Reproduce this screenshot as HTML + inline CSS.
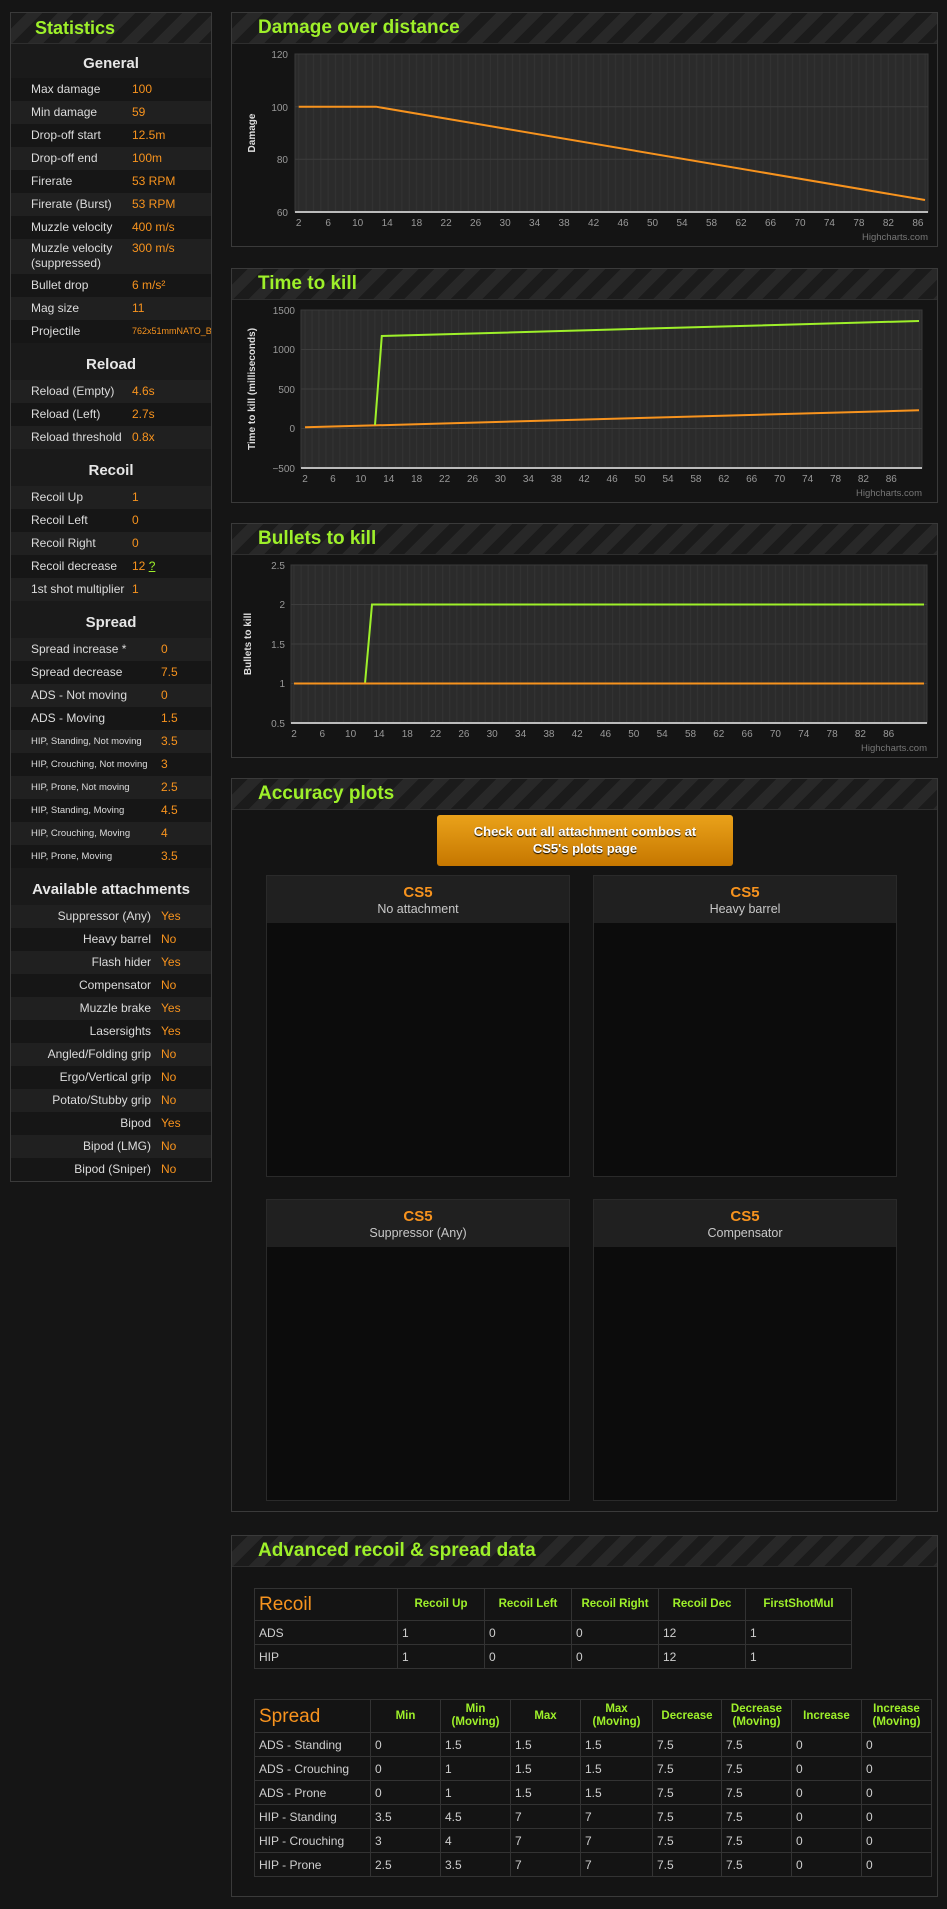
<!DOCTYPE html>
<html><head><meta charset="utf-8">
<style>
*{box-sizing:border-box;margin:0;padding:0}
body{width:947px;height:1909px;background:#151515;font-family:"Liberation Sans",Arial,sans-serif;position:relative;overflow:hidden;color:#d8d8d8}
.abs{position:absolute}
.hdr{background:repeating-linear-gradient(135deg,#1b1b1b 0 11px,#282828 11px 22px);border-bottom:1px solid #2e2e2e;height:31px;position:relative}
.hdr span{position:absolute;top:4px;font-weight:bold;font-size:19px;color:#9ef02a}
.panel{position:absolute;left:231px;width:707px;border:1px solid #3a3a3a;background:#141414}
#side{position:absolute;left:10px;top:12px;width:202px;height:1170px;border:1px solid #3a3a3a;background:#191919}
.sh{height:37px;text-align:center;font-weight:bold;font-size:15px;color:#e6e6e6;padding-top:13px;background:#1a1a1a}
.r{height:23px;font-size:12px;line-height:23px;position:relative;background:#161616}
.r.l{background:#202020}
.r b{font-weight:normal;position:absolute;left:20px;color:#dcdcdc;white-space:nowrap}
.r i{font-style:normal;position:absolute;left:121px;color:#f7931e;white-space:nowrap}
.sp i{left:150px}
.sm b{font-size:9.5px}
.at b{left:auto;right:60px}
.at i{left:150px}
.box{position:absolute;width:304px;border:1px solid #2a2a2a;background:#0c0c0c}
.box .bh{height:47px;background:#202020;text-align:center;padding-top:8px}
.bh .c{color:#f7931e;font-weight:bold;font-size:15px}
.bh .s{color:#c8c8c8;font-size:12.5px;margin-top:1px}
table{border-collapse:collapse;position:absolute;font-size:12px;color:#cfcfcf}
td,th{border:1px solid #333;padding:0 4px;height:24px;text-align:left;font-weight:normal}
th{color:#9ef02a;font-weight:bold;text-align:center;font-size:11.5px;line-height:13px}
th.t{color:#f7931e;font-size:19px;text-align:left;font-weight:normal}
</style></head><body>

<div id="side">
<div class="hdr"><span style="left:24px;font-size:18px;top:5px">Statistics</span></div>
<div class="sh" style="height:34px;padding-top:11px">General</div>
<div class="r"><b>Max damage</b><i>100</i></div>
<div class="r l"><b>Min damage</b><i>59</i></div>
<div class="r"><b>Drop-off start</b><i>12.5m</i></div>
<div class="r l"><b>Drop-off end</b><i>100m</i></div>
<div class="r"><b>Firerate</b><i>53 RPM</i></div>
<div class="r l"><b>Firerate (Burst)</b><i>53 RPM</i></div>
<div class="r"><b>Muzzle velocity</b><i>400 m/s</i></div>
<div class="r l" style="height:35px;line-height:15px"><b style="top:2px">Muzzle velocity<br>(suppressed)</b><i style="top:2px">300 m/s</i></div>
<div class="r"><b>Bullet drop</b><i>6 m/s²</i></div>
<div class="r l"><b>Mag size</b><i>11</i></div>
<div class="r" style="overflow:hidden"><b>Projectile</b><i style="font-size:9px">762x51mmNATO_Bolt_c</i></div>
<div class="sh">Reload</div>
<div class="r l"><b>Reload (Empty)</b><i>4.6s</i></div>
<div class="r"><b>Reload (Left)</b><i>2.7s</i></div>
<div class="r l"><b>Reload threshold</b><i>0.8x</i></div>
<div class="sh">Recoil</div>
<div class="r l"><b>Recoil Up</b><i>1</i></div>
<div class="r"><b>Recoil Left</b><i>0</i></div>
<div class="r l"><b>Recoil Right</b><i>0</i></div>
<div class="r"><b>Recoil decrease</b><i>12 <u style="color:#9ef02a">?</u></i></div>
<div class="r l"><b>1st shot multiplier</b><i>1</i></div>
<div class="sh">Spread</div>
<div class="r l sp"><b>Spread increase *</b><i>0</i></div>
<div class="r sp"><b>Spread decrease</b><i>7.5</i></div>
<div class="r l sp"><b>ADS - Not moving</b><i>0</i></div>
<div class="r sp"><b>ADS - Moving</b><i>1.5</i></div>
<div class="r l sp sm"><b>HIP, Standing, Not moving</b><i>3.5</i></div>
<div class="r sp sm"><b>HIP, Crouching, Not moving</b><i>3</i></div>
<div class="r l sp sm"><b>HIP, Prone, Not moving</b><i>2.5</i></div>
<div class="r sp sm"><b>HIP, Standing, Moving</b><i>4.5</i></div>
<div class="r l sp sm"><b>HIP, Crouching, Moving</b><i>4</i></div>
<div class="r sp sm"><b>HIP, Prone, Moving</b><i>3.5</i></div>
<div class="sh">Available attachments</div>
<div class="r l at"><b>Suppressor (Any)</b><i>Yes</i></div>
<div class="r at"><b>Heavy barrel</b><i>No</i></div>
<div class="r l at"><b>Flash hider</b><i>Yes</i></div>
<div class="r at"><b>Compensator</b><i>No</i></div>
<div class="r l at"><b>Muzzle brake</b><i>Yes</i></div>
<div class="r at"><b>Lasersights</b><i>Yes</i></div>
<div class="r l at"><b>Angled/Folding grip</b><i>No</i></div>
<div class="r at"><b>Ergo/Vertical grip</b><i>No</i></div>
<div class="r l at"><b>Potato/Stubby grip</b><i>No</i></div>
<div class="r at"><b>Bipod</b><i>Yes</i></div>
<div class="r l at"><b>Bipod (LMG)</b><i>No</i></div>
<div class="r at"><b>Bipod (Sniper)</b><i>No</i></div>
</div>

<div class="panel" style="top:12px;height:235px"><div class="hdr"><span style="left:26px">Damage over distance</span></div></div>
<div class="panel" style="top:268px;height:235px"><div class="hdr"><span style="left:26px">Time to kill</span></div></div>
<div class="panel" style="top:523px;height:235px"><div class="hdr"><span style="left:26px">Bullets to kill</span></div></div>
<div class="panel" style="top:778px;height:734px"><div class="hdr"><span style="left:26px">Accuracy plots</span></div>
<div class="abs" style="left:205px;top:36px;width:296px;height:51px;border-radius:3px;background:linear-gradient(#eaa21a,#c67700);color:#fff;font-weight:bold;font-size:13px;text-align:center;line-height:17px;padding-top:8px;text-shadow:0 1px 1px #000">Check out all attachment combos at<br>CS5's plots page</div>
</div>
<div class="box" style="left:266px;top:875px;height:302px"><div class="bh"><div class="c">CS5</div><div class="s">No attachment</div></div></div>
<div class="box" style="left:593px;top:875px;height:302px"><div class="bh"><div class="c">CS5</div><div class="s">Heavy barrel</div></div></div>
<div class="box" style="left:266px;top:1199px;height:302px"><div class="bh"><div class="c">CS5</div><div class="s">Suppressor (Any)</div></div></div>
<div class="box" style="left:593px;top:1199px;height:302px"><div class="bh"><div class="c">CS5</div><div class="s">Compensator</div></div></div>

<div class="panel" style="top:1535px;height:362px"><div class="hdr"><span style="left:26px">Advanced recoil &amp; spread data</span></div></div>

<table style="left:254px;top:1588px;width:598px">
<tr style="height:32px"><th class="t" style="width:143px">Recoil</th><th style="width:87px">Recoil Up</th><th style="width:87px">Recoil Left</th><th style="width:87px">Recoil Right</th><th style="width:87px">Recoil Dec</th><th>FirstShotMul</th></tr>
<tr><td>ADS</td><td>1</td><td>0</td><td>0</td><td>12</td><td>1</td></tr>
<tr><td>HIP</td><td>1</td><td>0</td><td>0</td><td>12</td><td>1</td></tr>
</table>

<table style="left:254px;top:1699px;width:678px">
<tr style="height:33px"><th class="t" style="width:116px">Spread</th><th style="width:70px">Min</th><th style="width:70px">Min<br>(Moving)</th><th style="width:70px">Max</th><th style="width:72px">Max<br>(Moving)</th><th style="width:69px">Decrease</th><th style="width:70px">Decrease<br>(Moving)</th><th style="width:70px">Increase</th><th>Increase<br>(Moving)</th></tr>
<tr><td>ADS - Standing</td><td>0</td><td>1.5</td><td>1.5</td><td>1.5</td><td>7.5</td><td>7.5</td><td>0</td><td>0</td></tr>
<tr><td>ADS - Crouching</td><td>0</td><td>1</td><td>1.5</td><td>1.5</td><td>7.5</td><td>7.5</td><td>0</td><td>0</td></tr>
<tr><td>ADS - Prone</td><td>0</td><td>1</td><td>1.5</td><td>1.5</td><td>7.5</td><td>7.5</td><td>0</td><td>0</td></tr>
<tr><td>HIP - Standing</td><td>3.5</td><td>4.5</td><td>7</td><td>7</td><td>7.5</td><td>7.5</td><td>0</td><td>0</td></tr>
<tr><td>HIP - Crouching</td><td>3</td><td>4</td><td>7</td><td>7</td><td>7.5</td><td>7.5</td><td>0</td><td>0</td></tr>
<tr><td>HIP - Prone</td><td>2.5</td><td>3.5</td><td>7</td><td>7</td><td>7.5</td><td>7.5</td><td>0</td><td>0</td></tr>
</table>

<svg class="abs" style="left:0;top:0" width="947" height="800" font-family="Liberation Sans, sans-serif">
<defs>
<pattern id="g1" x="295" y="0" width="7.37" height="10" patternUnits="userSpaceOnUse"><rect width="7.37" height="10" fill="#2b2b2b"/><rect x="3.2" width="1" height="10" fill="#333"/></pattern>
<pattern id="g2" x="301" y="0" width="6.98" height="10" patternUnits="userSpaceOnUse"><rect width="6.98" height="10" fill="#2b2b2b"/><rect x="3.5" width="1" height="10" fill="#333"/></pattern>
<pattern id="g3" x="291" y="0" width="7.08" height="10" patternUnits="userSpaceOnUse"><rect width="7.08" height="10" fill="#2b2b2b"/><rect x="2.5" width="1" height="10" fill="#333"/></pattern>
</defs>
<g font-size="10" fill="#999">
<rect x="295" y="54" width="633" height="158" fill="url(#g1)" stroke="#3a3a3a"/>
<g stroke="#3c3c3c"><line x1="295" x2="928" y1="106.7" y2="106.7"/><line x1="295" x2="928" y1="159.3" y2="159.3"/></g>
<line x1="295" x2="928" y1="212" y2="212" stroke="#bbb" stroke-width="2"/>
<g text-anchor="end"><text x="288" y="58">120</text><text x="288" y="111">100</text><text x="288" y="163">80</text><text x="288" y="216">60</text></g>
<text transform="translate(255,133) rotate(-90)" text-anchor="middle" font-weight="bold" fill="#ddd" font-size="10">Damage</text>
<g text-anchor="middle"><text x="298.7" y="226">2</text><text x="328.2" y="226">6</text><text x="357.7" y="226">10</text><text x="387.2" y="226">14</text><text x="416.6" y="226">18</text><text x="446.1" y="226">22</text><text x="475.6" y="226">26</text><text x="505.1" y="226">30</text><text x="534.6" y="226">34</text><text x="564.1" y="226">38</text><text x="593.6" y="226">42</text><text x="623" y="226">46</text><text x="652.5" y="226">50</text><text x="682" y="226">54</text><text x="711.5" y="226">58</text><text x="741" y="226">62</text><text x="770.5" y="226">66</text><text x="800" y="226">70</text><text x="829.4" y="226">74</text><text x="858.9" y="226">78</text><text x="888.4" y="226">82</text><text x="917.9" y="226">86</text></g>
<text x="928" y="240" text-anchor="end" font-size="9.5" fill="#777">Highcharts.com</text>
<polyline points="298.7,106.7 376,106.7 925,200" fill="none" stroke="#f7931e" stroke-width="2"/>

<rect x="301" y="310" width="621" height="158" fill="url(#g2)" stroke="#3a3a3a"/>
<g stroke="#3c3c3c"><line x1="301" x2="922" y1="349.5" y2="349.5"/><line x1="301" x2="922" y1="389" y2="389"/><line x1="301" x2="922" y1="428.5" y2="428.5"/></g>
<line x1="301" x2="922" y1="468" y2="468" stroke="#bbb" stroke-width="2"/>
<g text-anchor="end"><text x="295" y="314">1500</text><text x="295" y="353">1000</text><text x="295" y="393">500</text><text x="295" y="432">0</text><text x="295" y="472">−500</text></g>
<text transform="translate(255,389) rotate(-90)" text-anchor="middle" font-weight="bold" fill="#ddd" font-size="10">Time to kill (milliseconds)</text>
<g text-anchor="middle"><text x="305" y="482">2</text><text x="332.9" y="482">6</text><text x="360.8" y="482">10</text><text x="388.8" y="482">14</text><text x="416.7" y="482">18</text><text x="444.6" y="482">22</text><text x="472.5" y="482">26</text><text x="500.4" y="482">30</text><text x="528.4" y="482">34</text><text x="556.3" y="482">38</text><text x="584.2" y="482">42</text><text x="612.1" y="482">46</text><text x="640" y="482">50</text><text x="668" y="482">54</text><text x="695.9" y="482">58</text><text x="723.8" y="482">62</text><text x="751.7" y="482">66</text><text x="779.6" y="482">70</text><text x="807.6" y="482">74</text><text x="835.5" y="482">78</text><text x="863.4" y="482">82</text><text x="891.3" y="482">86</text></g>
<text x="922" y="496" text-anchor="end" font-size="9.5" fill="#777">Highcharts.com</text>
<polyline points="305,427.3 919,410.3" fill="none" stroke="#f7931e" stroke-width="2"/>
<polyline points="375,425 381.8,336 919,321" fill="none" stroke="#9ef02a" stroke-width="2"/>

<rect x="291" y="565" width="636" height="158" fill="url(#g3)" stroke="#3a3a3a"/>
<g stroke="#3c3c3c"><line x1="291" x2="927" y1="604.5" y2="604.5"/><line x1="291" x2="927" y1="644" y2="644"/><line x1="291" x2="927" y1="683.5" y2="683.5"/></g>
<line x1="291" x2="927" y1="723" y2="723" stroke="#bbb" stroke-width="2"/>
<g text-anchor="end"><text x="285" y="569">2.5</text><text x="285" y="608">2</text><text x="285" y="648">1.5</text><text x="285" y="687">1</text><text x="285" y="727">0.5</text></g>
<text transform="translate(251,644) rotate(-90)" text-anchor="middle" font-weight="bold" fill="#ddd" font-size="10">Bullets to kill</text>
<g text-anchor="middle"><text x="294" y="737">2</text><text x="322.3" y="737">6</text><text x="350.6" y="737">10</text><text x="379" y="737">14</text><text x="407.3" y="737">18</text><text x="435.6" y="737">22</text><text x="463.9" y="737">26</text><text x="492.2" y="737">30</text><text x="520.6" y="737">34</text><text x="548.9" y="737">38</text><text x="577.2" y="737">42</text><text x="605.5" y="737">46</text><text x="633.8" y="737">50</text><text x="662.2" y="737">54</text><text x="690.5" y="737">58</text><text x="718.8" y="737">62</text><text x="747.1" y="737">66</text><text x="775.4" y="737">70</text><text x="803.8" y="737">74</text><text x="832.1" y="737">78</text><text x="860.4" y="737">82</text><text x="888.7" y="737">86</text></g>
<text x="927" y="751" text-anchor="end" font-size="9.5" fill="#777">Highcharts.com</text>
<polyline points="294,683.5 365,683.5 372,604.5 924,604.5" fill="none" stroke="#9ef02a" stroke-width="2"/>
<polyline points="294,683.5 924,683.5" fill="none" stroke="#f7931e" stroke-width="2"/>
</g>
</svg>
</body></html>
